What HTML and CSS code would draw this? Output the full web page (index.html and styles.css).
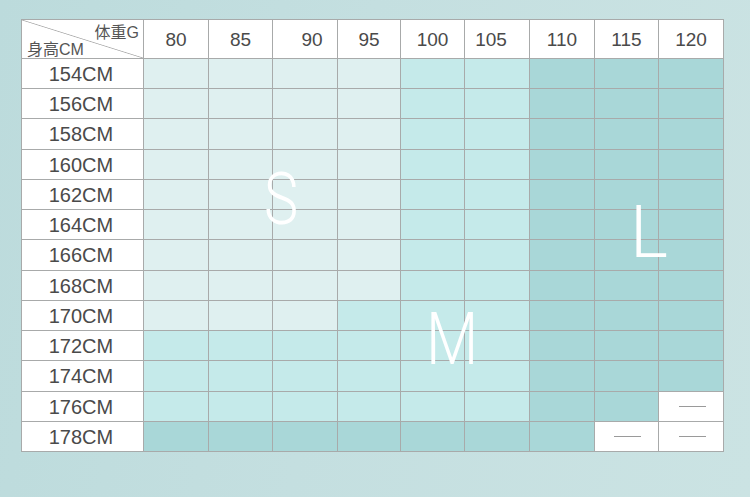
FILE: index.html
```html
<!DOCTYPE html>
<html>
<head>
<meta charset="utf-8">
<link rel="stylesheet" href="styles.css">
</head>
<body>
<div class="page">
  <div class="chart">
    <div class="grid">
      <div class="cell corner"><span class="c-top">体重G</span><span class="c-bot">身高CM</span></div>
      <div class="cell head">80</div>
      <div class="cell head">85</div>
      <div class="cell head shift-r">90</div>
      <div class="cell head">95</div>
      <div class="cell head">100</div>
      <div class="cell head shift-l">105</div>
      <div class="cell head">110</div>
      <div class="cell head">115</div>
      <div class="cell head">120</div>

      <div class="cell label">154CM</div>
      <div class="cell s"></div><div class="cell s"></div><div class="cell s"></div><div class="cell s"></div><div class="cell m"></div><div class="cell m"></div><div class="cell l"></div><div class="cell l"></div><div class="cell l"></div>
      <div class="cell label">156CM</div>
      <div class="cell s"></div><div class="cell s"></div><div class="cell s"></div><div class="cell s"></div><div class="cell m"></div><div class="cell m"></div><div class="cell l"></div><div class="cell l"></div><div class="cell l"></div>
      <div class="cell label">158CM</div>
      <div class="cell s"></div><div class="cell s"></div><div class="cell s"></div><div class="cell s"></div><div class="cell m"></div><div class="cell m"></div><div class="cell l"></div><div class="cell l"></div><div class="cell l"></div>
      <div class="cell label">160CM</div>
      <div class="cell s"></div><div class="cell s"></div><div class="cell s"></div><div class="cell s"></div><div class="cell m"></div><div class="cell m"></div><div class="cell l"></div><div class="cell l"></div><div class="cell l"></div>
      <div class="cell label">162CM</div>
      <div class="cell s"></div><div class="cell s"></div><div class="cell s"></div><div class="cell s"></div><div class="cell m"></div><div class="cell m"></div><div class="cell l"></div><div class="cell l"></div><div class="cell l"></div>
      <div class="cell label">164CM</div>
      <div class="cell s"></div><div class="cell s"></div><div class="cell s"></div><div class="cell s"></div><div class="cell m"></div><div class="cell m"></div><div class="cell l"></div><div class="cell l"></div><div class="cell l"></div>
      <div class="cell label">166CM</div>
      <div class="cell s"></div><div class="cell s"></div><div class="cell s"></div><div class="cell s"></div><div class="cell m"></div><div class="cell m"></div><div class="cell l"></div><div class="cell l"></div><div class="cell l"></div>
      <div class="cell label">168CM</div>
      <div class="cell s"></div><div class="cell s"></div><div class="cell s"></div><div class="cell s"></div><div class="cell m"></div><div class="cell m"></div><div class="cell l"></div><div class="cell l"></div><div class="cell l"></div>
      <div class="cell label">170CM</div>
      <div class="cell s"></div><div class="cell s"></div><div class="cell s"></div><div class="cell m"></div><div class="cell m"></div><div class="cell m"></div><div class="cell l"></div><div class="cell l"></div><div class="cell l"></div>
      <div class="cell label">172CM</div>
      <div class="cell m"></div><div class="cell m"></div><div class="cell m"></div><div class="cell m"></div><div class="cell m"></div><div class="cell m"></div><div class="cell l"></div><div class="cell l"></div><div class="cell l"></div>
      <div class="cell label">174CM</div>
      <div class="cell m"></div><div class="cell m"></div><div class="cell m"></div><div class="cell m"></div><div class="cell m"></div><div class="cell m"></div><div class="cell l"></div><div class="cell l"></div><div class="cell l"></div>
      <div class="cell label">176CM</div>
      <div class="cell m"></div><div class="cell m"></div><div class="cell m"></div><div class="cell m"></div><div class="cell m"></div><div class="cell m"></div><div class="cell l"></div><div class="cell l"></div><div class="cell w"><span class="dash"></span></div>
      <div class="cell label">178CM</div>
      <div class="cell l"></div><div class="cell l"></div><div class="cell l"></div><div class="cell l"></div><div class="cell l"></div><div class="cell l"></div><div class="cell l"></div><div class="cell w"><span class="dash"></span></div><div class="cell w"><span class="dash"></span></div>
    </div>
    <span class="size size-s">S</span>
    <span class="size size-m">M</span>
    <span class="size size-l">L</span>
  </div>
</div>
</body>
</html>
```

FILE: styles.css
```css
html, body {
  margin: 0;
  padding: 0;
}
body {
  width: 750px;
  height: 497px;
  overflow: hidden;
  background: linear-gradient(100deg, #bcdbdc 0%, #c4dfe0 45%, #cbe3e3 100%);
  font-family: "Liberation Sans", Arial, "Noto Sans CJK SC", sans-serif;
}
.page {
  padding: 19px 0 0 21px;
}
.chart {
  position: relative;
  width: 703px;
}
.grid {
  display: grid;
  grid-template-columns: 121px 64px 63px 64px 62px 63px 64px 64px 63px 64px;
  grid-template-rows: 38px 29px 29px 30px 29px 29px 29px 30px 29px 29px 29px 30px 29px 29px;
  gap: 1px;
  background: #a8aaaa;
  border: 1px solid #a8aaaa;
}
.cell {
  display: flex;
  align-items: center;
  justify-content: center;
  color: #4a4a4a;
}
.head {
  background: #fff;
  font-size: 19px;
  padding-top: 1px;
}
.shift-r { padding-left: 14px; }
.shift-l { padding-right: 12px; }
.label {
  background: #fff;
  font-size: 20px;
  padding-right: 3px;
  padding-top: 1px;
}
.corner {
  background: #fff linear-gradient(to top right, transparent calc(50% - 0.8px), #b0b0b0 50%, transparent calc(50% + 0.8px));
  flex-direction: column;
  align-items: stretch;
  justify-content: space-between;
  padding: 4px 4px 1px 5px;
  font-size: 16px;
  color: #555;
  line-height: 17px;
}
.c-top { text-align: right; }
.c-bot { text-align: left; }
.s { background: #dff0f0; }
.m { background: #c5eaea; }
.l { background: #a9d7d8; }
.w { background: #fff; }
.dash {
  width: 27px;
  height: 1px;
  background: #9a9a9a;
  margin-left: 2px;
}
.size {
  position: absolute;
  font-family: Roboto, "Liberation Sans", sans-serif;
  font-weight: 300;
  font-size: 72px;
  line-height: 72px;
  color: #fff;
  transform-origin: left top;
}
.size-s { left: 243px; top: 145px; transform: scaleX(0.8); }
.size-m { left: 405px; top: 285px; transform: scaleX(0.84); }
.size-l { left: 609px; top: 178px; }
```
